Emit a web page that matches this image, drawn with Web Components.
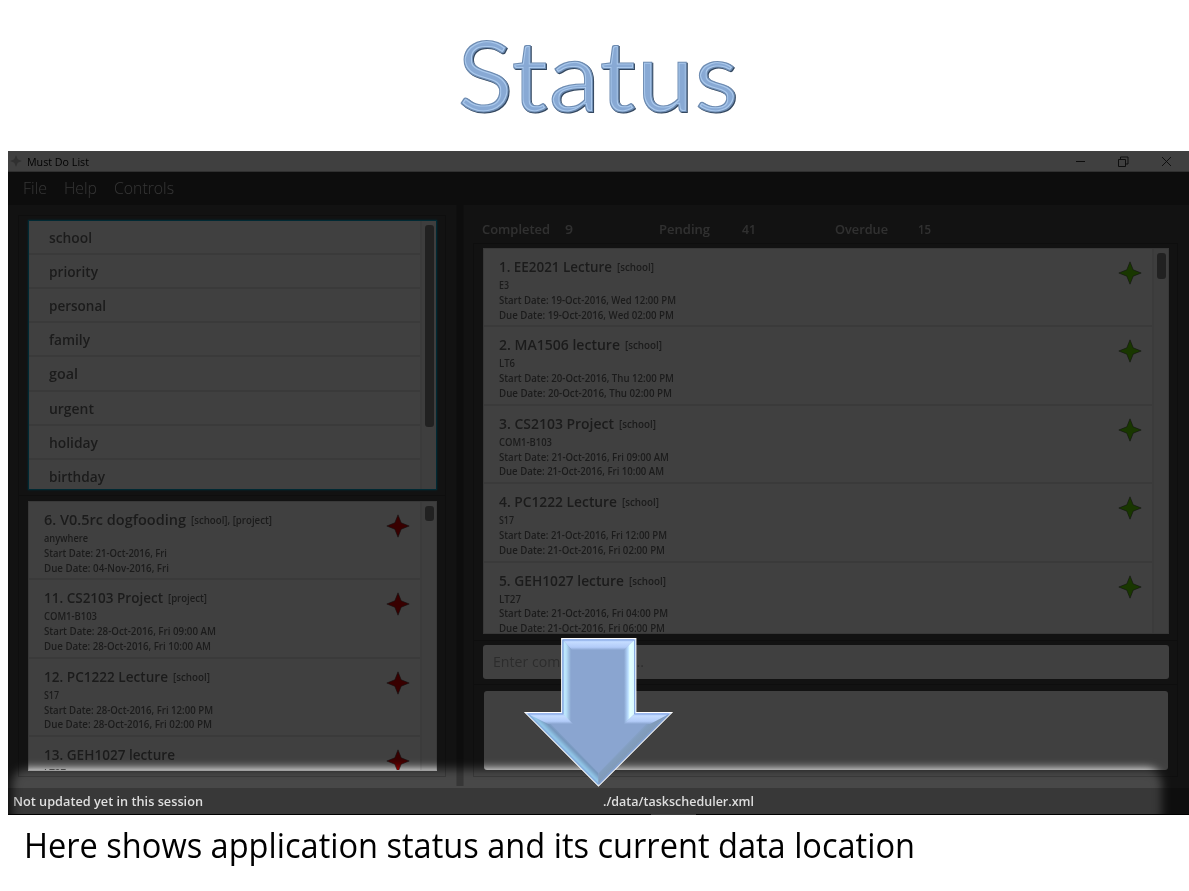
<!DOCTYPE html>
<html lang="en">
<head>
<meta charset="utf-8">
<title>Status</title>
<style>
html,body{margin:0;background:#fff}
body{font-family:"Open Sans","Noto Sans",sans-serif;overflow:hidden}
</style>
</head>
<body>
<status-slide></status-slide>
<script>
const define=(name,html,setup)=>{
  const t=document.createElement('template');t.innerHTML=html;
  customElements.define(name,class extends HTMLElement{
    connectedCallback(){
      if(this.shadowRoot)return;
      this.attachShadow({mode:'open'}).append(t.content.cloneNode(true));
      if(setup)setup(this,this.shadowRoot);
    }
  });
};

/* A single line of text condensed or widened to an exact width. */
define('fit-text',`<style>
:host{display:inline-block;white-space:nowrap;flex:none}
span{display:inline-block;transform-origin:0 50%}
</style><span><slot></slot></span>`,(el,root)=>{
  const s=root.querySelector('span'),w=+el.getAttribute('w'),n=s.offsetWidth?s.getBoundingClientRect().width:0;
  if(w&&n){s.style.transform='scaleX('+w/n+')';el.style.width=w+'px';}
});

define('slide-title',`<style>
:host{display:block;height:151px}svg{display:block}
text{font-family:Lato,"Open Sans",sans-serif;font-size:99px}
</style>
<svg width="1189" height="151">
<defs><filter id="bevel" x="-5%" y="-10%" width="110%" height="120%" color-interpolation-filters="sRGB">
<feMorphology in="SourceAlpha" operator="erode" radius="1" result="e1"/>
<feMorphology in="SourceAlpha" operator="erode" radius="2" result="e2"/>
<feOffset in="SourceAlpha" dx="1" dy=".6" result="o"/>
<feFlood flood-color="#33475f"/><feComposite in2="o" operator="in" result="shade"/>
<feFlood flood-color="#6e8cb2"/><feComposite in2="SourceAlpha" operator="in" result="edge"/>
<feFlood flood-color="#a9c8ec"/><feComposite in2="e1" operator="in" result="light"/>
<feFlood flood-color="#88a9d4"/><feComposite in2="e2" operator="in" result="core"/>
<feMerge><feMergeNode in="shade"/><feMergeNode in="edge"/><feMergeNode in="light"/><feMergeNode in="core"/></feMerge>
</filter></defs>
<text x="457" y="112" textLength="282" lengthAdjust="spacingAndGlyphs" fill="#8aa9d4" filter="url(#bevel)">Status</text>
</svg>`);

define('title-bar',`<style>
:host{display:flex;align-items:center;height:21px;background:#fff;border-bottom:1px solid #c0c0c0;box-sizing:border-box;padding:0 17px 0 2px;font-size:10.5px;color:#000}
.t{margin-left:5px;flex:1;line-height:20px;padding-top:1px}
svg{display:block}.c{display:flex;gap:32px}
</style>
<svg width="12" height="12" viewBox="0 0 12 12"><path d="M6 0L7.8 4.2 12 6 7.8 7.8 6 12 4.2 7.8 0 6 4.2 4.2Z" fill="#c0c0c0"/></svg>
<span class="t"><fit-text w="62">Must Do List</fit-text></span>
<div class="c">
<svg width="11" height="11"><path d="M1 5.5H10" stroke="#333"/></svg>
<svg width="11" height="11" fill="none" stroke="#222" stroke-width=".9"><path d="M.5 3.5H7.5V10.5H.5ZM2.5 3V1H10V8H8"/></svg>
<svg width="11" height="11"><path d="M1 1L10 10M10 1L1 10" stroke="#222" stroke-width=".9"/></svg>
</div>`);

define('menu-bar',`<style>
:host{display:flex;gap:17px;height:33px;line-height:32px;box-sizing:border-box;background:#353535;padding-left:15px;font-size:16px;font-weight:300;color:#d0d0d0}
</style><fit-text w="24">File</fit-text><fit-text w="33">Help</fit-text><fit-text w="60">Controls</fit-text>`);

define('tag-row',`<style>
:host{display:block;height:34.12px;box-sizing:border-box;border-bottom:2px solid #e7e7e7;padding-left:19.5px;font-size:14px;line-height:33px;font-weight:600;color:#6e6e6e}
</style><slot></slot>`,(el)=>{
  const f=document.createElement('fit-text');f.setAttribute('w',el.getAttribute('w'));f.textContent=el.getAttribute('label');
  el.append(f);
});

define('task-card',`<style>
:host{display:grid;grid-template-columns:1fr auto;height:78.4px;box-sizing:border-box;border-bottom:2px solid #e7e7e7;padding:6px 10px 0 14.5px;color:#6e6e6e;font-weight:600}
.h{display:flex;align-items:center;gap:5px;height:22px;font-size:14.6px;line-height:22px}
.h .g{font-size:10px;padding-top:2px}
p{margin:0;font-size:10px;line-height:14.8px;height:14.8px}
.loc{margin-top:1px}
svg{display:block;margin-top:6px}
</style>
<div><div class="h"></div><div class="b"></div></div>
<svg width="24" height="24" viewBox="0 0 24 24"><path d="M12 .8L15.2 8.8 23.2 12 15.2 15.2 12 23.2 8.8 15.2 .8 12 8.8 8.8Z" stroke="#444" stroke-width=".6"/></svg>`,(el,root)=>{
  const d=el.data;
  const line=(txt,w,cls,parent)=>{const f=document.createElement('fit-text');f.setAttribute('w',w);f.className=cls;f.textContent=txt;parent.append(f);};
  const h=root.querySelector('.h'),b=root.querySelector('.b');
  line(d.title[0],d.title[1],'',h);
  if(d.tag)line(d.tag[0],d.tag[1],'g',h);
  d.lines.forEach((l,i)=>{const p=document.createElement('p');if(!i)p.className='loc';b.append(p);line(l[0],l[1],'',p);});
  root.querySelector('path').setAttribute('fill',el.getAttribute('mark'));
});

define('scroll-list',`<style>
:host{display:grid;grid-template-columns:1fr 16px;box-sizing:border-box;background:#fff;overflow:hidden;border:1px solid #ddd}
.rows{overflow:hidden;min-height:0}
.bar{background:#f6f6f6;border-left:2px solid #e9e9e9;padding-left:3px}
.thumb{width:9px;height:var(--thumb);margin-top:var(--top,4px);border-radius:3px;background:#838383}
</style><div class="rows"><slot></slot></div><div class="bar"><div class="thumb"></div></div>`);

define('task-counts',`<style>
:host{display:grid;grid-template-columns:83px 94px 83px 93px 83px 1fr;height:33px;line-height:38px;font-size:13px;font-weight:600;color:#c0c0c0;padding-left:9px}
</style><fit-text w="68">Completed</fit-text><fit-text w="8">9</fit-text><fit-text w="51">Pending</fit-text><fit-text w="14">41</fit-text><fit-text w="53">Overdue</fit-text><fit-text w="13">15</fit-text>`);

define('command-box',`<style>
:host{display:block;height:34px;border-radius:3px;background:#fff;box-sizing:border-box;padding-left:10px;line-height:34px;font-size:14px;color:#b0b0b0}
</style><fit-text w="151">Enter command here...</fit-text>`);

define('status-bar',`<style>
:host{display:grid;grid-template-columns:590px 1fr;height:27px;box-sizing:border-box;background:linear-gradient(90deg,#000 643px,#3a3a3a 643px 688px,#000 688px) 0 100%/100% 1px no-repeat #383838;padding-left:5px;line-height:27px;font-size:12.5px;font-weight:600;color:#dedede}
</style><fit-text w="190">Not updated yet in this session</fit-text><fit-text w="151">./data/taskscheduler.xml</fit-text>`);

/* Dark veil with a soft-edged opening over the status bar. */
define('spot-light',`<style>
:host{position:absolute;inset:0;pointer-events:none}svg{display:block}
</style><svg width="1181" height="664">
<defs><filter id="soft" filterUnits="userSpaceOnUse" x="-40" y="560" width="1260" height="180"><feGaussianBlur stdDeviation="5"/></filter>
<mask id="hole" maskUnits="userSpaceOnUse" x="0" y="0" width="1181" height="664"><rect width="1181" height="664" fill="#fff"/><rect x="4" y="618" width="1150" height="60" rx="15" fill="#000" filter="url(#soft)"/></mask></defs>
<rect width="1181" height="664" fill="#000" fill-opacity=".75" mask="url(#hole)"/></svg>`);

define('down-arrow',`<style>
:host{position:absolute;left:515px;top:486px;pointer-events:none}svg{display:block}
</style><svg width="152" height="152" viewBox="523 637 152 152">
<defs>
<linearGradient id="top" x1="0" y1="0" x2="0" y2="1"><stop offset="0" stop-color="#a9c6fb"/><stop offset=".3" stop-color="#c3dbff"/><stop offset=".75" stop-color="#b2cbf8"/><stop offset="1" stop-color="#8aa5d0"/></linearGradient>
<linearGradient id="lf"><stop offset="0" stop-color="#9ab9e8"/><stop offset=".3" stop-color="#c0eaff"/><stop offset=".5" stop-color="#b5ddf6"/><stop offset="1" stop-color="#8aa5d0"/></linearGradient>
<linearGradient id="rt"><stop offset="0" stop-color="#8aa5d0"/><stop offset=".35" stop-color="#b9dcff"/><stop offset=".5" stop-color="#e2ffff"/><stop offset=".85" stop-color="#dcfaff"/><stop offset="1" stop-color="#a8caf6"/></linearGradient>
<linearGradient id="dl" gradientUnits="userSpaceOnUse" x1="561" y1="750" x2="570" y2="741"><stop offset="0" stop-color="#8fb4e3"/><stop offset=".35" stop-color="#90c5e6"/><stop offset=".7" stop-color="#7697bd"/><stop offset="1" stop-color="#8aa5d0"/></linearGradient>
<linearGradient id="dr" gradientUnits="userSpaceOnUse" x1="636" y1="750" x2="627" y2="741"><stop offset="0" stop-color="#88a9df"/><stop offset=".3" stop-color="#819bb8"/><stop offset=".7" stop-color="#829ebf"/><stop offset="1" stop-color="#8aa5d0"/></linearGradient>
</defs>
<path d="M562 639H635.5V713H671L598.5 785.5 526 713H562Z" fill="#8aa5d0" stroke="#fff" stroke-width="1.8"/>
<path d="M526 713L547 720 598.5 773V785.5Z" fill="url(#dl)"/>
<path d="M671 713L650 720 598.5 773V785.5Z" fill="url(#dr)"/>
<path d="M562 639H635.5L624.5 650H572Z" fill="url(#top)"/>
<path d="M562 639L571 649V724L562 713Z" fill="url(#lf)"/>
<path d="M635.5 639L624 650V724L635.5 713Z" fill="url(#rt)"/>
<path d="M526 713H562L573 724H548Z" fill="url(#top)"/>
<path d="M671 713H635.5L624 724H650Z" fill="url(#top)"/>
<path d="M563 640H634.5V714H668.5L598.5 784 528.5 714H563Z" fill="none" stroke="#7d9fda" stroke-width=".8"/>
</svg>`);

define('task-window',`<style>
:host{display:block;position:relative;height:664px;margin-left:8px;background:#484848;overflow:hidden}
.main{display:grid;grid-template-columns:448px 8px 1fr;height:583px}
.split{background:#363636;border:solid #3e3e3e;border-width:0 1px;height:581px}
.left,.right{box-sizing:border-box;min-width:0}
.left{padding:10px 10px 12px}
.frame{box-sizing:border-box;border:1px solid #3b3b3b}
.left .frame{padding:4px 8px 0 9px;height:281px}
.left .frame+.frame{padding-top:5px;margin-top:-1px;height:282px}
.right{padding:5px 11px 12px 9px}
.right .frame+.frame{margin-top:-1px}
.r1{height:398px;padding:4px 8.5px 0 9px}
.r2{height:45px;padding:4px 8.5px 0 9px}.r3{height:93px;padding:6px 9px 0 10px}
.tags{height:270px;border:1.5px solid #00a4cc;box-shadow:0 0 2px #00a4cc;--thumb:202px}
.late{height:270px;--thumb:15px}
.tasks{height:386px;--thumb:26px}
.result{height:79px;border-radius:3px;background:#fff}
</style>
<title-bar></title-bar><menu-bar></menu-bar>
<div class="main">
<div class="left"><div class="frame"><scroll-list class="tags">
<tag-row label="school" w="43"></tag-row><tag-row label="priority" w="49"></tag-row><tag-row label="personal" w="57"></tag-row><tag-row label="family" w="41"></tag-row><tag-row label="goal" w="29"></tag-row><tag-row label="urgent" w="45"></tag-row><tag-row label="holiday" w="49"></tag-row><tag-row label="birthday" w="56"></tag-row>
</scroll-list></div><div class="frame"><scroll-list class="late"></scroll-list></div></div>
<div class="split"></div>
<div class="right"><task-counts></task-counts>
<div class="frame r1"><scroll-list class="tasks"></scroll-list></div>
<div class="frame r2"><command-box></command-box></div>
<div class="frame r3"><div class="result"></div></div></div>
</div>
<status-bar></status-bar><spot-light></spot-light><down-arrow></down-arrow>`,(el,root)=>{
  const fill=(sel,mark,items)=>items.forEach(([t,w,g,gw,...l])=>{
    const c=document.createElement('task-card');
    c.data={title:[t,w],tag:g&&[g,gw],lines:l};c.setAttribute('mark',mark);
    root.querySelector(sel).append(c);
  });
  fill('.late','#e00000',[
    ['6. V0.5rc dogfooding',142,'[school], [project]',81,['anywhere',44],['Start Date: 21-Oct-2016, Fri',123],['Due Date: 04-Nov-2016, Fri',125]],
    ['11. CS2103 Project',119,'[project]',39,['COM1-B103',53],['Start Date: 28-Oct-2016, Fri 09:00 AM',172],['Due Date: 28-Oct-2016, Fri 10:00 AM',167]],
    ['12. PC1222 Lecture',124,'[school]',37,['S17',15],['Start Date: 28-Oct-2016, Fri 12:00 PM',169],['Due Date: 28-Oct-2016, Fri 02:00 PM',168]],
    ['13. GEH1027 lecture',131,'',0,['LT27',22]]]);
  fill('.tasks','#64dc00',[
    ['1. EE2021 Lecture',113,'[school]',37,['E3',10],['Start Date: 19-Oct-2016, Wed 12:00 PM',177],['Due Date: 19-Oct-2016, Wed 02:00 PM',175]],
    ['2. MA1506 lecture',121,'[school]',37,['LT6',16],['Start Date: 20-Oct-2016, Thu 12:00 PM',175],['Due Date: 20-Oct-2016, Thu 02:00 PM',173]],
    ['3. CS2103 Project',115,'[school]',37,['COM1-B103',53],['Start Date: 21-Oct-2016, Fri 09:00 AM',170],['Due Date: 21-Oct-2016, Fri 10:00 AM',165]],
    ['4. PC1222 Lecture',118,'[school]',37,['S17',15],['Start Date: 21-Oct-2016, Fri 12:00 PM',168],['Due Date: 21-Oct-2016, Fri 02:00 PM',166]],
    ['5. GEH1027 lecture',125,'[school]',37,['LT27',22],['Start Date: 21-Oct-2016, Fri 04:00 PM',169],['Due Date: 21-Oct-2016, Fri 06:00 PM',166]]]);
});

define('slide-caption',`<style>
:host{display:block;height:76px;padding-left:23.5px;line-height:61px;font-size:34px;color:#000}
</style><fit-text w="891">Here shows application status and its current data location</fit-text>`);

define('status-slide',`<style>:host{display:block;width:1189px;height:891px;background:#fff;overflow:hidden}</style>
<slide-title></slide-title><task-window></task-window><slide-caption></slide-caption>`);
</script>
</body>
</html>
